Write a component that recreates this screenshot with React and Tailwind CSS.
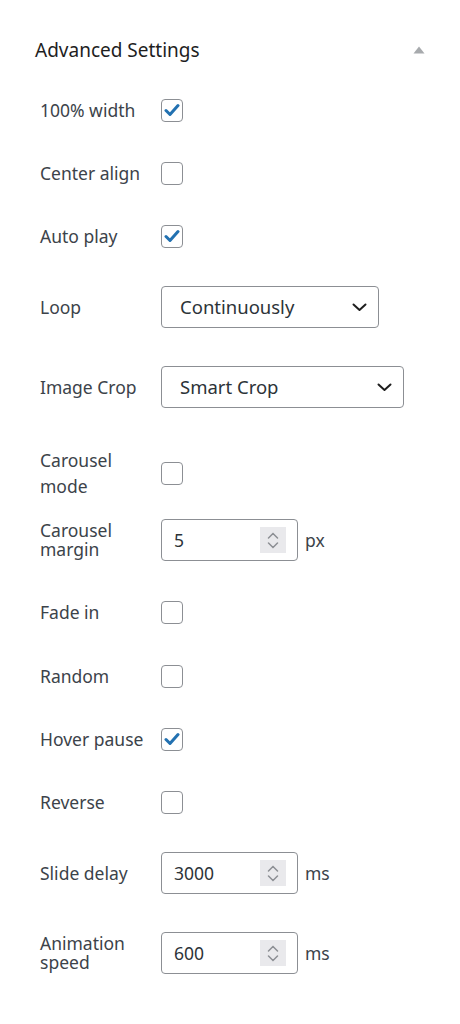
import React, { useState } from 'react';

const font = { fontFamily: '"Noto Sans", "Open Sans", Arial, sans-serif' };

function Check({ checked, onChange }) {
  return (
    <button
      type="button"
      onClick={onChange}
      className="w-[22px] h-[23px] rounded-[4px] border border-[#8c8f94] bg-white flex items-center justify-center"
    >
      {checked && (
        <svg width="16" height="14" viewBox="0 0 16 14">
          <path d="M2 7.5 L6 11.5 L14 2.5" fill="none" stroke="#2271b1" strokeWidth="3" strokeLinecap="round" strokeLinejoin="round" />
        </svg>
      )}
    </button>
  );
}

function Chevron() {
  return (
    <svg width="15" height="9" viewBox="0 0 15 9">
      <path d="M1.5 1.5 L7.5 7 L13.5 1.5" fill="none" stroke="#1e1e1e" strokeWidth="2" strokeLinecap="round" strokeLinejoin="round" />
    </svg>
  );
}

function Select({ value, width }) {
  return (
    <div className={`${width} h-[42px] rounded-[4px] border border-[#8c8f94] bg-white flex items-center justify-between pl-[18px] pr-[11px]`}>
      <span className="text-[18.5px] text-[#2c3338]">{value}</span>
      <Chevron />
    </div>
  );
}

function NumberInput({ value, unit }) {
  return (
    <div className="flex items-center gap-[7px]">
      <div className="w-[137px] h-[42px] rounded-[4px] border border-[#8c8f94] bg-white flex items-center justify-between pl-[12px] pr-[11px]">
        <span className="text-[17.5px] text-[#2c3338]">{value}</span>
        <div className="w-[26px] h-[26px] bg-[#e9e9ec] flex flex-col items-center justify-center gap-[3px]">
          <svg width="12" height="7" viewBox="0 0 12 7">
            <path d="M1.5 6 L6 1.5 L10.5 6" fill="none" stroke="#8c8f94" strokeWidth="1.5" strokeLinecap="round" />
          </svg>
          <svg width="12" height="7" viewBox="0 0 12 7">
            <path d="M1.5 1 L6 5.5 L10.5 1" fill="none" stroke="#8c8f94" strokeWidth="1.5" strokeLinecap="round" />
          </svg>
        </div>
      </div>
      <span className="text-[17.5px] text-[#3c434a]">{unit}</span>
    </div>
  );
}

function Row({ label, mt, h, tight, children }) {
  return (
    <div className={`flex items-center ${h} ${mt}`}>
      <div className={`w-[121px] text-[17.5px] text-[#3c434a] ${tight ? 'leading-[19px]' : 'leading-[26px]'}`}>
        {label.map((l) => (
          <div key={l}>{l}</div>
        ))}
      </div>
      {children}
    </div>
  );
}

export default function App() {
  const [checks, setChecks] = useState({
    width: true,
    center: false,
    autoplay: true,
    carousel: false,
    fade: false,
    random: false,
    hover: true,
    reverse: false,
  });
  const toggle = (k) => setChecks({ ...checks, [k]: !checks[k] });

  return (
    <div className="w-[460px] min-h-[1024px] bg-white pt-[37px] pl-[40px]" style={font}>
      <div className="flex items-center justify-between h-[26px] -ml-[5px] pr-[35px]">
        <h2 className="text-[19px] text-[#1e1e1e] pt-[1px]">Advanced Settings</h2>
        <svg width="12" height="8" viewBox="0 0 12 8">
          <path d="M6 0.5 L11.5 7.5 L0.5 7.5 Z" fill="#a7aaad" />
        </svg>
      </div>

      <Row label={['100% width']} mt="mt-[34px]" h="h-[26px]">
        <Check checked={checks.width} onChange={() => toggle('width')} />
      </Row>
      <Row label={['Center align']} mt="mt-[37px]" h="h-[26px]">
        <Check checked={checks.center} onChange={() => toggle('center')} />
      </Row>
      <Row label={['Auto play']} mt="mt-[37px]" h="h-[26px]">
        <Check checked={checks.autoplay} onChange={() => toggle('autoplay')} />
      </Row>
      <Row label={['Loop']} mt="mt-[37px]" h="h-[42px]">
        <Select value="Continuously" width="w-[218px]" />
      </Row>
      <Row label={['Image Crop']} mt="mt-[38px]" h="h-[42px]">
        <Select value="Smart Crop" width="w-[243px]" />
      </Row>
      <Row label={['Carousel', 'mode']} mt="mt-[39px]" h="h-[52px]">
        <Check checked={checks.carousel} onChange={() => toggle('carousel')} />
      </Row>
      <Row label={['Carousel', 'margin']} mt="mt-[20px]" h="h-[42px]" tight>
        <NumberInput value="5" unit="px" />
      </Row>
      <Row label={['Fade in']} mt="mt-[38px]" h="h-[26px]">
        <Check checked={checks.fade} onChange={() => toggle('fade')} />
      </Row>
      <Row label={['Random']} mt="mt-[38px]" h="h-[26px]">
        <Check checked={checks.random} onChange={() => toggle('random')} />
      </Row>
      <Row label={['Hover pause']} mt="mt-[37px]" h="h-[26px]">
        <Check checked={checks.hover} onChange={() => toggle('hover')} />
      </Row>
      <Row label={['Reverse']} mt="mt-[37px]" h="h-[26px]">
        <Check checked={checks.reverse} onChange={() => toggle('reverse')} />
      </Row>
      <Row label={['Slide delay']} mt="mt-[37px]" h="h-[42px]">
        <NumberInput value="3000" unit="ms" />
      </Row>
      <Row label={['Animation', 'speed']} mt="mt-[38px]" h="h-[42px]" tight>
        <NumberInput value="600" unit="ms" />
      </Row>
    </div>
  );
}
